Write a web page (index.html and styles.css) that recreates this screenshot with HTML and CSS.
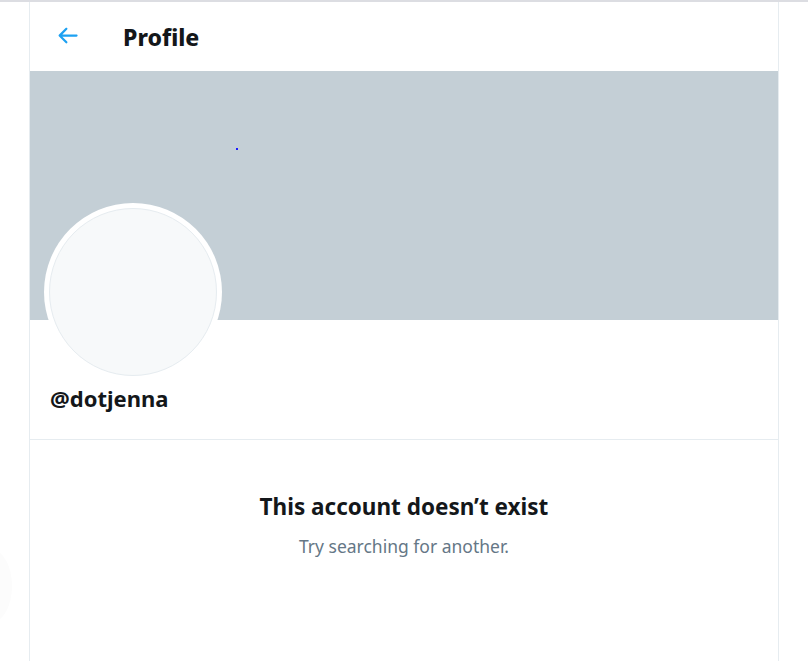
FILE: index.html
```html
<!DOCTYPE html>
<html lang="en">
<head>
<meta charset="utf-8">
<title>Profile</title>
<link rel="stylesheet" href="styles.css">
</head>
<body>
<div class="topline"></div>
<div class="ghost"></div>
<main class="column">
  <header class="header">
    <a class="back" href="#" aria-label="Back">
      <svg viewBox="0 0 24 24" width="27" height="27"><path d="M20 11H7.414l4.293-4.293c.39-.39.39-1.023 0-1.414s-1.023-.39-1.414 0l-6 6c-.39.39-.39 1.023 0 1.414l6 6c.195.195.45.293.707.293s.512-.098.707-.293c.39-.39.39-1.023 0-1.414L7.414 13H20c.553 0 1-.447 1-1s-.447-1-1-1z"/></svg>
    </a>
    <h1 class="title">Profile</h1>
  </header>
  <div class="banner"><span class="dot"></span></div>
  <section class="profile">
    <div class="avatar"><div class="avatar-inner"></div></div>
    <div class="handle">@dotjenna</div>
  </section>
  <section class="empty">
    <h2 class="empty-title">This account doesn’t exist</h2>
    <p class="empty-sub">Try searching for another.</p>
  </section>
</main>
</body>
</html>
```
FILE: styles.css
```css
html, body {
  margin: 0;
  padding: 0;
  background: #ffffff;
  font-family: "Noto Sans", "Open Sans", Arial, sans-serif;
  color: #14171a;
}
.topline {
  height: 2px;
  background: #dcdde2;
}
.ghost {
  position: absolute;
  left: -28px;
  top: 550px;
  width: 40px;
  height: 72px;
  border-radius: 50%;
  background: #fcfcfc;
}
.column {
  position: relative;
  width: 748px;
  margin-left: 29px;
  border-left: 1px solid #e6ecf0;
  border-right: 1px solid #e6ecf0;
  min-height: 659px;
  background: #fff;
}
.header {
  height: 68px;
  display: flex;
  align-items: center;
  padding-left: 24px;
}
.back {
  display: flex;
  width: 27px;
  height: 27px;
  align-items: center;
  justify-content: center;
  margin-right: 42px;
  margin-top: -2px;
}
.back svg { fill: #1da1f2; }
.title {
  margin: 0;
  font-size: 23px;
  font-weight: 800;
  line-height: 28px;
  margin-top: 1px;
}
.banner {
  position: relative;
  height: 249px;
  margin-top: 1px;
  background: #c4cfd6;
}
.dot {
  position: absolute;
  left: 206px;
  top: 77px;
  width: 2px;
  height: 2px;
  background: #1a1aff;
}
.profile {
  display: flex;
  flex-direction: column;
  padding: 0 14px;
  height: 119px;
  border-bottom: 1px solid #e6ecf0;
}
.avatar {
  position: relative;
  width: 178px;
  height: 178px;
  margin-top: -117px;
  border-radius: 50%;
  background: #fff;
  display: flex;
  align-items: center;
  justify-content: center;
  flex-shrink: 0;
}
.avatar-inner {
  width: 166px;
  height: 166px;
  border-radius: 50%;
  background: #f7f9fa;
  border: 1px solid #e6ecf0;
}
.handle {
  margin-top: 2px;
  padding-left: 6px;
  font-size: 22px;
  font-weight: 700;
  line-height: 30px;
}
.empty {
  text-align: center;
  padding-top: 52px;
}
.empty-title {
  margin: 0;
  font-size: 22.5px;
  font-weight: 700;
  line-height: 30px;
}
.empty-sub {
  margin: 13px 0 0;
  font-size: 17.5px;
  line-height: 22px;
  color: #657786;
}
```
